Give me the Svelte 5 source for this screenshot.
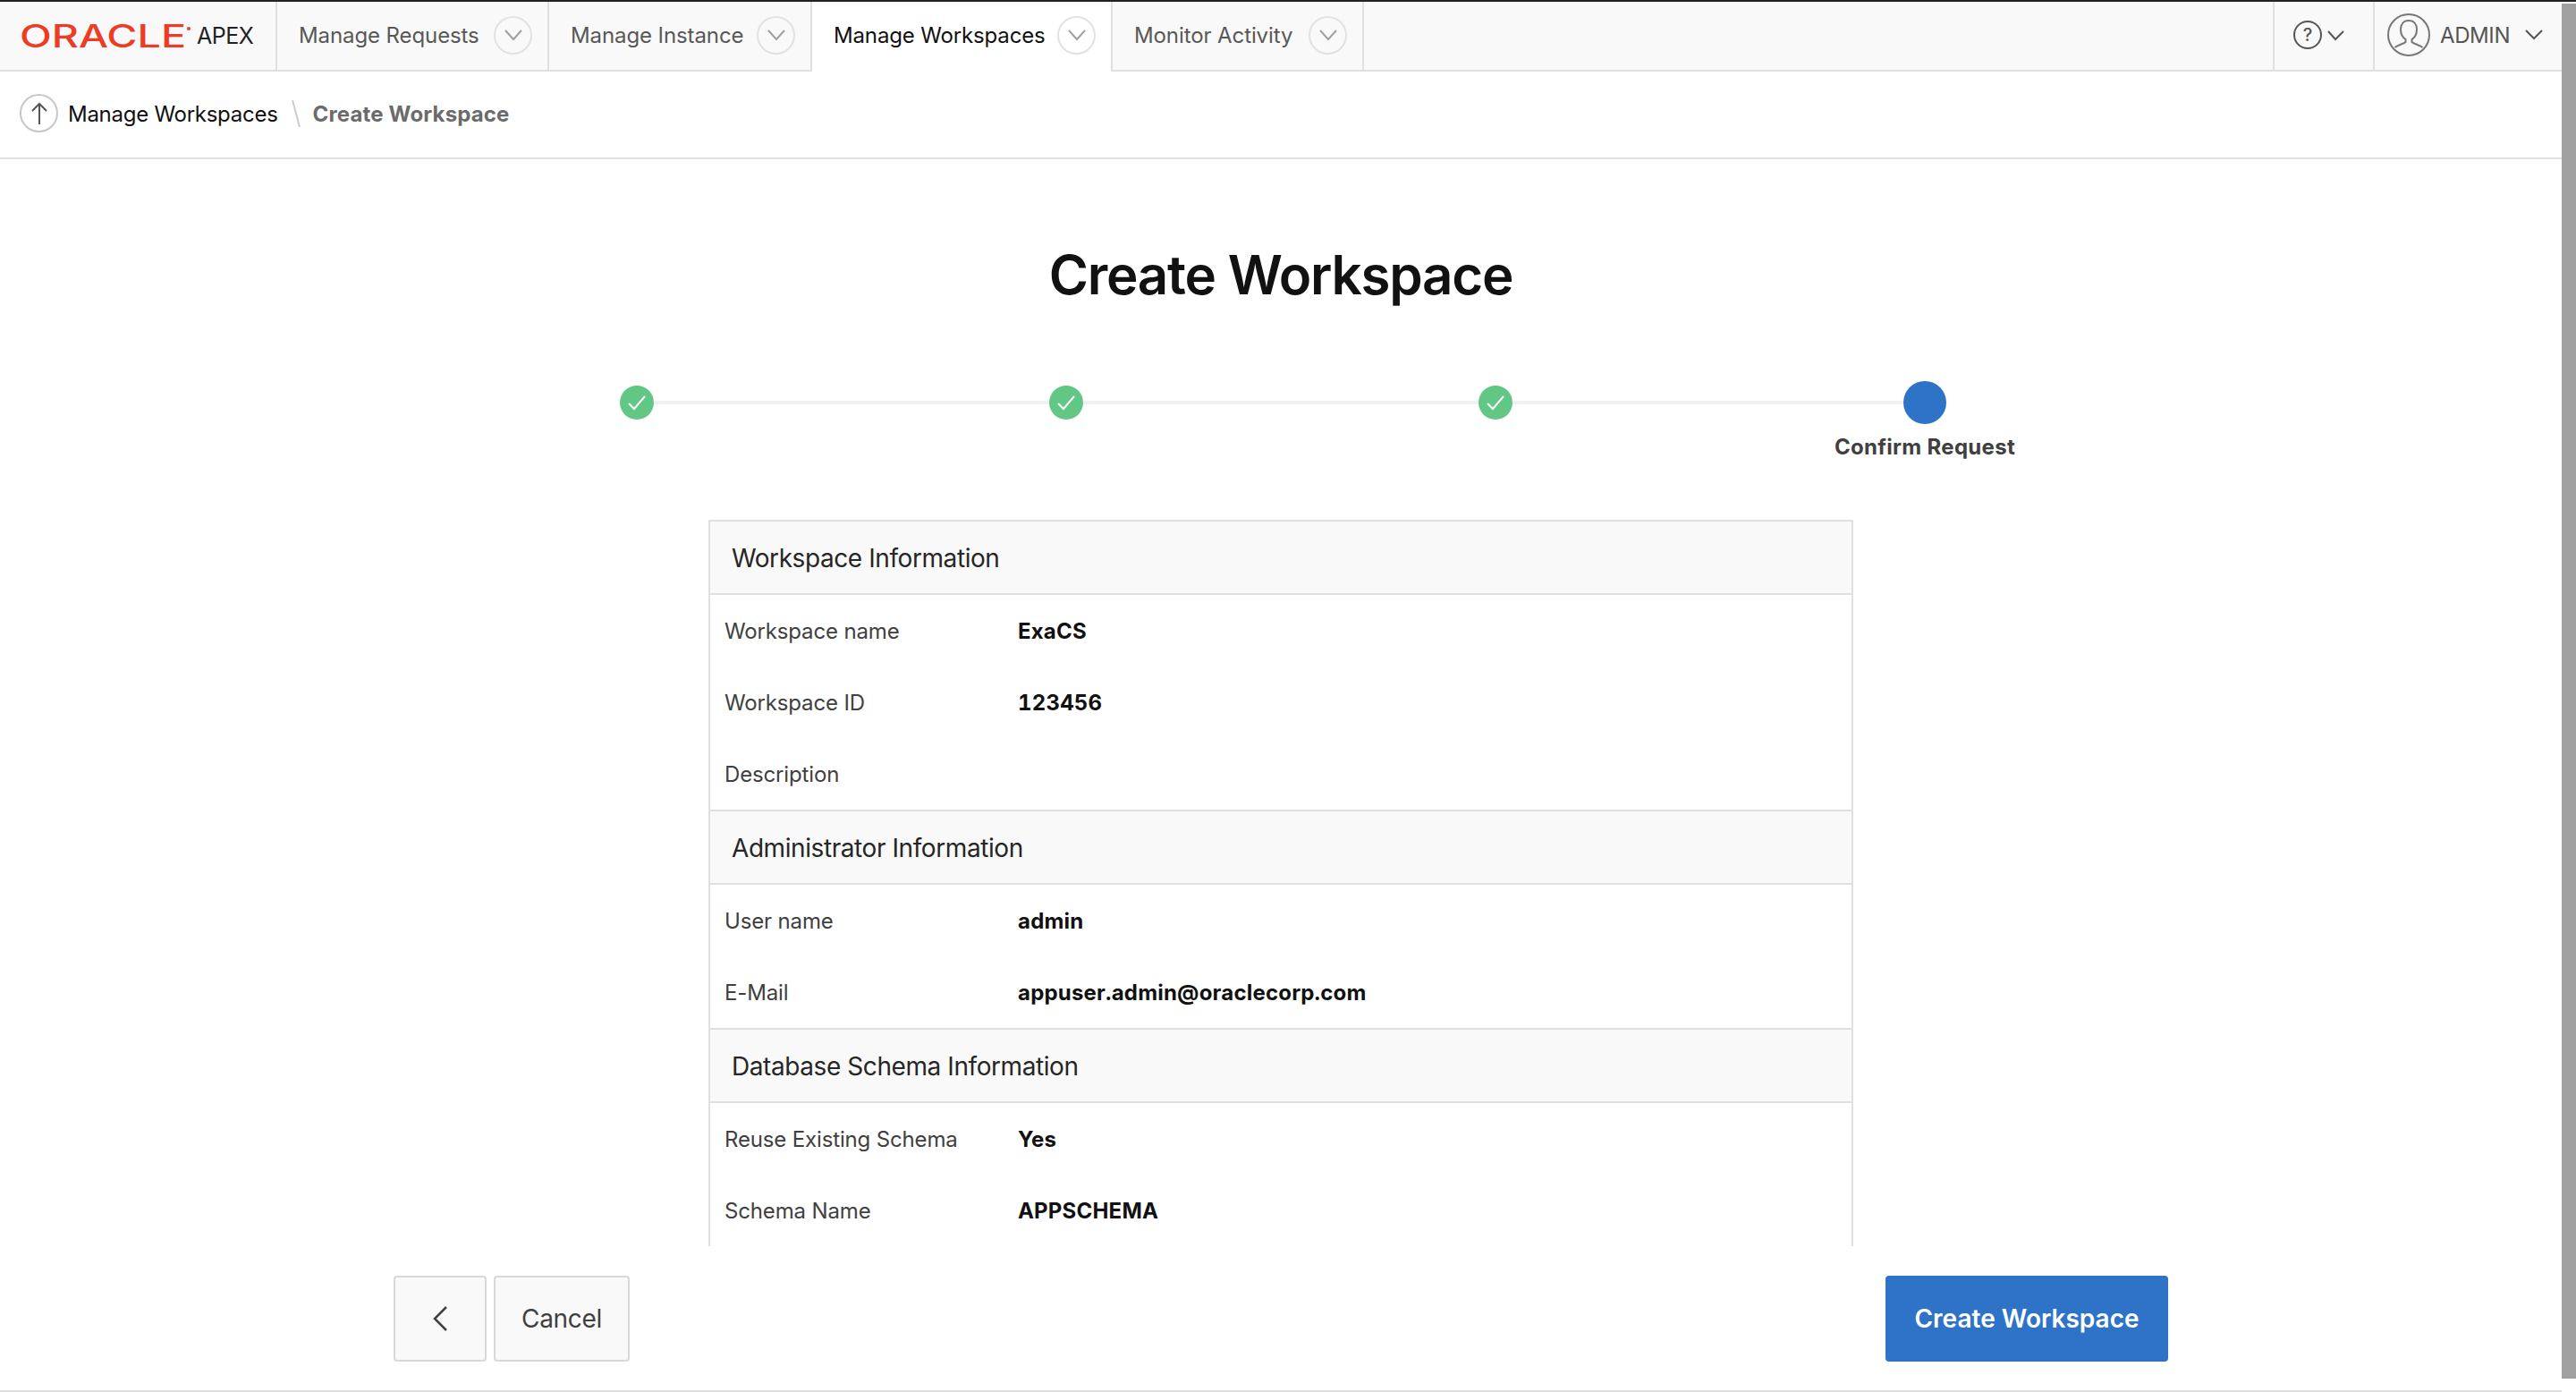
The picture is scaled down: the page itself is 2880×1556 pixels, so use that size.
<script>
  const navItems = [
    { label: 'Manage Requests', width: 304 },
    { label: 'Manage Instance', width: 294 },
    { label: 'Manage Workspaces', width: 336, active: true },
    { label: 'Monitor Activity', width: 281 }
  ];

  const sections = [
    {
      title: 'Workspace Information',
      rows: [
        ['Workspace name', 'ExaCS'],
        ['Workspace ID', '123456'],
        ['Description', '']
      ]
    },
    {
      title: 'Administrator Information',
      rows: [
        ['User name', 'admin'],
        ['E-Mail', 'appuser.admin@oraclecorp.com']
      ]
    },
    {
      title: 'Database Schema Information',
      rows: [
        ['Reuse Existing Schema', 'Yes'],
        ['Schema Name', 'APPSCHEMA']
      ]
    }
  ];
</script>

<div class="app">
  <div class="topline"></div>
  <div class="shell">
    <div class="page">
      <header class="header">
        <div class="logo">
          <svg width="218" height="40" viewBox="0 0 218 40">
            <text x="22" y="33" class="oracle" textLength="186" lengthAdjust="spacingAndGlyphs">ORACLE</text>
            <circle cx="211" cy="12" r="2" fill="#ee3b26" />
          </svg>
          <span class="apex">APEX</span>
        </div>
        {#each navItems as item}
          <div class="tab" class:active={item.active} style="width: {item.width}px">
            <span>{item.label}</span>
            <span class="round">
              <svg width="22" height="14" viewBox="0 0 22 14"><path d="M2 2l9 10 9-10" /></svg>
            </span>
          </div>
        {/each}
        <div class="spacer"></div>
        <div class="help">
          <svg width="80" height="34" viewBox="0 0 80 34">
            <circle cx="17" cy="17" r="15" class="line" />
            <text x="17" y="24" class="qmark">?</text>
            <path d="M40 13l8 9 9-9" class="line" />
          </svg>
        </div>
        <div class="user">
          <svg class="avatar" width="50" height="50" viewBox="0 0 50 50">
            <circle cx="25" cy="25" r="23" class="grey" />
            <path class="grey" d="M25 9c-6 0-9 4.500-9 10 0 5 2.500 9 5.500 11v3c-2 2-8 3-12 6M25 9c6 0 9 4.500 9 10 0 5-2.500 9-5.500 11v3c2 2 8 3 12 6" />
          </svg>
          <span class="admin">ADMIN</span>
          <svg width="20" height="12" viewBox="0 0 20 12"><path d="M1 1l9 9 9-9" class="line" /></svg>
        </div>
      </header>

      <nav class="crumbs">
        <span class="round up">
          <svg width="18" height="26" viewBox="0 0 18 26"><path d="M9 25V2M1 10l8-8 8 8" /></svg>
        </span>
        <span class="parent">Manage Workspaces</span>
        <svg class="slash" width="10" height="30" viewBox="0 0 10 30"><path d="M1 0l8 30" /></svg>
        <span class="current">Create Workspace</span>
      </nav>

      <main class="content">
        <h1>Create Workspace</h1>
        <div class="steps">
          {#each [0, 1, 2] as step}
            <div class="step">
              <span class="dot">
                <svg width="22" height="18" viewBox="0 0 22 18"><path d="M2 10l6 6L20 2" /></svg>
              </span>
            </div>
          {/each}
          <div class="step last">
            <span class="dot current-dot"></span>
            <span class="step-label">Confirm Request</span>
          </div>
        </div>

        <div class="card">
          {#each sections as section}
            <h2>{section.title}</h2>
            {#each section.rows as row}
              <div class="row">
                <span class="label">{row[0]}</span>
                <span class="value">{row[1]}</span>
              </div>
            {/each}
          {/each}
        </div>
      </main>

      <footer class="footer">
        <button class="btn back" aria-label="Previous">
          <svg width="18" height="30" viewBox="0 0 18 30"><path d="M16 2L3 15l13 13" /></svg>
        </button>
        <button class="btn cancel">Cancel</button>
        <button class="btn primary">Create Workspace</button>
      </footer>
    </div>
    <div class="rail"><div class="thumb"></div></div>
  </div>
</div>

<style>
  :global(body) {
    margin: 0;
    background: #fff;
  }

  .app {
    display: flex;
    flex-direction: column;
    height: 1556px;
    overflow: hidden;
    font-family: Inter, 'Noto Sans', sans-serif;
    font-size: 24px;
    color: #404040;
  }

  .topline {
    height: 2px;
    flex: none;
    background: #222;
  }

  .shell {
    flex: 1;
    display: flex;
    min-height: 0;
  }

  .page {
    flex: 1;
    min-width: 0;
    display: flex;
    flex-direction: column;
    border-bottom: 2px solid #e0e0e0;
  }

  .rail {
    width: 16px;
    flex: none;
    padding: 2px 0 15px;
    display: flex;
  }

  .thumb {
    flex: 1;
    background: #a0a0a0;
  }

  /* top bar */
  .header {
    height: 78px;
    flex: none;
    display: flex;
    background: #f9f9f9;
    position: relative;
    box-shadow: inset 0 -2px 0 #e0e0e0;
  }

  .logo {
    width: 310px;
    box-sizing: border-box;
    flex: none;
    display: flex;
    align-items: center;
    border-right: 2px solid #e0e0e0;
    margin-bottom: 2px;
  }

  .logo svg {
    flex: none;
  }

  .oracle {
    font-family: Inter, sans-serif;
    font-size: 35px;
    font-weight: 500;
    fill: #ee3b26;
  }

  .apex {
    margin-left: 2px;
    font-size: 25px;
    color: #222;
    letter-spacing: -0.5px;
  }

  .tab {
    box-sizing: border-box;
    flex: none;
    display: flex;
    align-items: center;
    justify-content: space-between;
    padding: 0 17px 2px 24px;
    border-right: 2px solid #e0e0e0;
    margin-bottom: 2px;
    color: #585858;
    letter-spacing: -0.1px;
  }

  .tab span:first-child {
    margin-top: 1px;
  }

  .tab.active {
    background: #fff;
    color: #111;
    margin-bottom: 0;
    padding-bottom: 4px;
    height: 78px;
    letter-spacing: -0.15px;
  }

  .round {
    box-sizing: border-box;
    width: 43px;
    height: 43px;
    flex: none;
    display: flex;
    align-items: center;
    justify-content: center;
    border: 2px solid #e2e2e2;
    border-radius: 50%;
  }

  .round path {
    fill: none;
    stroke: #a0a0a0;
    stroke-width: 2;
  }

  .spacer {
    flex: 1;
  }

  .help {
    width: 112px;
    box-sizing: border-box;
    flex: none;
    display: flex;
    align-items: center;
    padding: 0 0 2px 20px;
    border-left: 2px solid #e0e0e0;
    margin-bottom: 2px;
  }

  .line {
    fill: none;
    stroke: #555;
    stroke-width: 2;
  }

  .grey {
    fill: none;
    stroke: #777;
    stroke-width: 2;
  }

  .qmark {
    font-size: 20px;
    font-weight: 500;
    fill: #555;
    text-anchor: middle;
  }

  .user {
    width: 211px;
    box-sizing: border-box;
    flex: none;
    display: flex;
    align-items: center;
    padding: 0 0 2px 13px;
    border-left: 2px solid #e0e0e0;
    margin-bottom: 2px;
  }

  .admin {
    margin: 0 17px 0 10px;
    color: #555;
    letter-spacing: -0.4px;
  }

  /* breadcrumb */
  .crumbs {
    height: 98px;
    flex: none;
    box-sizing: border-box;
    display: flex;
    align-items: center;
    padding: 0 0 3px 22px;
    border-bottom: 2px solid #e0e0e0;
  }

  .round.up {
    border-color: #c4c8cc;
  }

  .round.up path {
    stroke: #555;
  }

  .parent {
    margin: 1px 0 0 11px;
    color: #111;
    letter-spacing: -0.27px;
  }

  .slash {
    margin: 0 14px 0 15px;
  }

  .slash path {
    stroke: #ccc;
    stroke-width: 2;
    fill: none;
  }

  .current {
    margin-top: 1px;
    font-weight: 700;
    color: #6b6b6b;
    letter-spacing: 0.15px;
  }

  /* wizard body */
  .content {
    flex: 1;
    min-height: 0;
    overflow: hidden;
    display: flex;
    flex-direction: column;
    align-items: center;
  }

  h1 {
    margin: 93px 0 0;
    font-size: 60px;
    line-height: 72px;
    font-weight: 600;
    letter-spacing: -1.2px;
    color: #111;
  }

  .steps {
    display: flex;
    width: 1920px;
    margin-top: 83px;
    height: 155px;
    flex: none;
  }

  .step {
    position: relative;
    width: 480px;
    height: 48px;
    display: flex;
    flex-direction: column;
    align-items: center;
    flex: none;
  }

  .step::after {
    content: '';
    position: absolute;
    left: 50%;
    width: 100%;
    top: 22px;
    height: 4px;
    background: #f0f0f0;
  }

  .step.last::after {
    display: none;
  }

  .dot {
    position: relative;
    z-index: 1;
    width: 38px;
    height: 38px;
    margin-top: 5px;
    border-radius: 50%;
    background: #62c784;
    display: flex;
    align-items: center;
    justify-content: center;
    flex: none;
  }

  .dot path {
    fill: none;
    stroke: #fff;
    stroke-width: 2;
  }

  .current-dot {
    width: 48px;
    height: 48px;
    margin-top: 0;
    background: #2e73c7;
  }

  .step-label {
    margin-top: 11px;
    line-height: 30px;
    font-weight: 700;
    white-space: nowrap;
    color: #404040;
    letter-spacing: 0.3px;
  }

  .card {
    box-sizing: border-box;
    width: 1280px;
    flex: none;
    border: solid #e0e0e0;
    border-width: 0 2px;
  }

  h2 {
    box-sizing: border-box;
    height: 84px;
    margin: 0;
    padding: 2px 24px 0;
    display: flex;
    align-items: center;
    font-size: 28px;
    font-weight: 400;
    letter-spacing: -0.42px;
    color: #262626;
    background: #f9f9f9;
    border: solid #e0e0e0;
    border-width: 2px 0;
  }

  .row {
    height: 80px;
    display: flex;
    align-items: center;
    padding-left: 16px;
  }

  .label {
    width: 328px;
    flex: none;
    color: #404040;
    letter-spacing: -0.15px;
  }

  .value {
    font-weight: 700;
    color: #111;
    letter-spacing: 0.2px;
    font-variant-numeric: tabular-nums;
  }

  /* bottom buttons */
  .footer {
    height: 160px;
    flex: none;
    box-sizing: border-box;
    display: flex;
    align-items: center;
    gap: 8px;
    padding: 0 440px;
  }

  .btn {
    box-sizing: border-box;
    height: 96px;
    display: flex;
    align-items: center;
    justify-content: center;
    border: 2px solid #d8d8d8;
    border-radius: 4px;
    background: #f9f9f9;
    font: inherit;
    font-size: 28px;
    color: #404040;
    padding: 0;
  }

  .back {
    width: 104px;
  }

  .back path {
    fill: none;
    stroke: #404040;
    stroke-width: 2.5;
  }

  .cancel {
    width: 152px;
    letter-spacing: -0.3px;
  }

  .primary {
    width: 316px;
    margin-left: auto;
    background: #2e73c7;
    border-color: #2e73c7;
    color: #fff;
    font-weight: 600;
  }
</style>
